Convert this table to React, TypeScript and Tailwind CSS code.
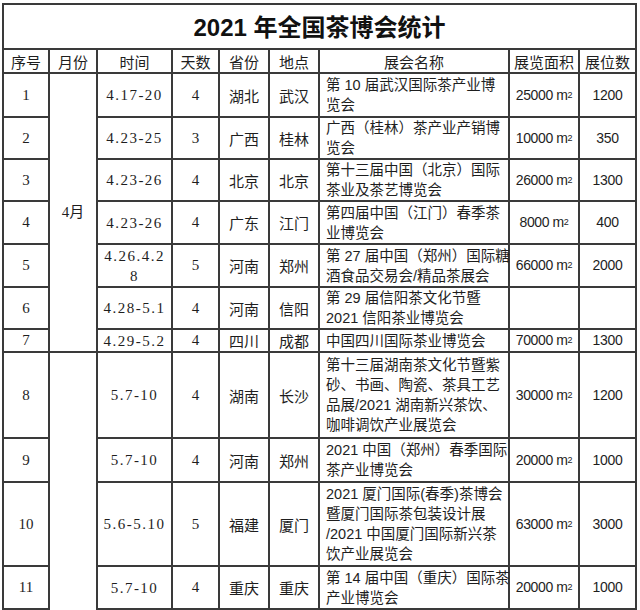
import React from "react";

const serif = "font-['Liberation_Serif','Noto_Sans_CJK_SC',serif]";
const sans = "font-['Liberation_Sans','Noto_Sans_CJK_SC',sans-serif]";
const cjk = "font-['Noto_Sans_CJK_SC',sans-serif]";
const cell = "border-2 border-[#3a3a3a] p-0 text-center align-middle leading-[19px]";

type Row = {
  no: string;
  time: string[];
  days: string;
  prov: string;
  city: string;
  name: string[];
  area: string;
  booths: string;
  h: string;
};

const rows: Row[] = [
  { no: "1", time: ["4.17-20"], days: "4", prov: "湖北", city: "武汉", name: ["第 10 届武汉国际茶产业博", "览会"], area: "25000", booths: "1200", h: "h-[44px]" },
  { no: "2", time: ["4.23-25"], days: "3", prov: "广西", city: "桂林", name: ["广西（桂林）茶产业产销博", "览会"], area: "10000", booths: "350", h: "h-[42px]" },
  { no: "3", time: ["4.23-26"], days: "4", prov: "北京", city: "北京", name: ["第十三届中国（北京）国际", "茶业及茶艺博览会"], area: "26000", booths: "1300", h: "h-[42px]" },
  { no: "4", time: ["4.23-26"], days: "4", prov: "广东", city: "江门", name: ["第四届中国（江门）春季茶", "业博览会"], area: "8000", booths: "400", h: "h-[43px]" },
  { no: "5", time: ["4.26.4.2", "8"], days: "5", prov: "河南", city: "郑州", name: ["第 27 届中国（郑州）国际糖", "酒食品交易会/精品茶展会"], area: "66000", booths: "2000", h: "h-[43px]" },
  { no: "6", time: ["4.28-5.1"], days: "4", prov: "河南", city: "信阳", name: ["第 29 届信阳茶文化节暨", "2021 信阳茶业博览会"], area: "", booths: "", h: "h-[42px]" },
  { no: "7", time: ["4.29-5.2"], days: "4", prov: "四川", city: "成都", name: ["中国四川国际茶业博览会"], area: "70000", booths: "1300", h: "h-[23px]" },
  { no: "8", time: ["5.7-10"], days: "4", prov: "湖南", city: "长沙", name: ["第十三届湖南茶文化节暨紫", "砂、书画、陶瓷、茶具工艺", "品展/2021 湖南新兴茶饮、", "咖啡调饮产业展览会"], area: "30000", booths: "1200", h: "h-[86px]" },
  { no: "9", time: ["5.7-10"], days: "4", prov: "河南", city: "郑州", name: ["2021 中国（郑州）春季国际", "茶产业博览会"], area: "20000", booths: "1000", h: "h-[44px]" },
  { no: "10", time: ["5.6-5.10"], days: "5", prov: "福建", city: "厦门", name: ["2021 厦门国际(春季)茶博会", "暨厦门国际茶包装设计展", "/2021 中国厦门国际新兴茶", "饮产业展览会"], area: "63000", booths: "3000", h: "h-[84px]" },
  { no: "11", time: ["5.7-10"], days: "4", prov: "重庆", city: "重庆", name: ["第 14 届中国（重庆）国际茶", "产业博览会"], area: "20000", booths: "1000", h: "h-[43px]" },
];

const headers = ["序号", "月份", "时间", "天数", "省份", "地点", "展会名称", "展览面积", "展位数"];

export default function App() {
  return (
    <div className="w-[640px] h-[610px] bg-white overflow-hidden pt-[3px] pl-[2px] text-[#1e1e1e]">
      <table className="table-fixed border-collapse w-[633px]">
        <colgroup>
          <col className="w-[46px]" />
          <col className="w-[48px]" />
          <col className="w-[75px]" />
          <col className="w-[47px]" />
          <col className="w-[50px]" />
          <col className="w-[50px]" />
          <col className="w-[190px]" />
          <col className="w-[70px]" />
          <col className="w-[57px]" />
        </colgroup>
        <tbody>
          <tr className="h-[45px]">
            <td colSpan={9} className={`${cell} ${sans} text-[24px] font-bold !leading-none pt-[2px] text-[#111]`}>
              2021 年全国茶博会统计
            </td>
          </tr>
          <tr className="h-[24px]">
            {headers.map((h) => (
              <td key={h} className={`${cell} ${cjk} text-[15px]`}>
                {h}
              </td>
            ))}
          </tr>
          {rows.map((r, i) => (
            <tr key={r.no} className={r.h}>
              <td className={`${cell} ${serif} text-[15px]`}>{r.no}</td>
              {i === 0 && (
                <td rowSpan={7} className={`${cell} ${serif} text-[15px]`}>
                  4月
                </td>
              )}
              {i === 7 && <td rowSpan={4} className={`${cell} border-b-0`}></td>}
              <td className={`${cell} ${serif} text-[15px] !leading-[20px] tracking-[1.5px] whitespace-nowrap`}>
                {r.time.map((t, k) => (
                  <div key={k}>{t}</div>
                ))}
              </td>
              <td className={`${cell} ${serif} text-[15px]`}>{r.days}</td>
              <td className={`${cell} ${cjk} text-[15px]`}>{r.prov}</td>
              <td className={`${cell} ${cjk} text-[15px]`}>{r.city}</td>
              <td className={`${cell} ${sans} text-[14.5px] !leading-[20px] text-left pl-[6px] whitespace-nowrap`}>
                {r.name.map((t, k) => (
                  <div key={k}>{t}</div>
                ))}
              </td>
              <td className={`${cell} ${sans} text-[14px] tracking-[-0.4px] whitespace-nowrap`}>
                {r.area && (
                  <>
                    {r.area} m<sup className="text-[9px] relative -top-[2px]">2</sup>
                  </>
                )}
              </td>
              <td className={`${cell} ${sans} text-[14px] tracking-[-0.3px]`}>{r.booths}</td>
            </tr>
          ))}
        </tbody>
      </table>
    </div>
  );
}
